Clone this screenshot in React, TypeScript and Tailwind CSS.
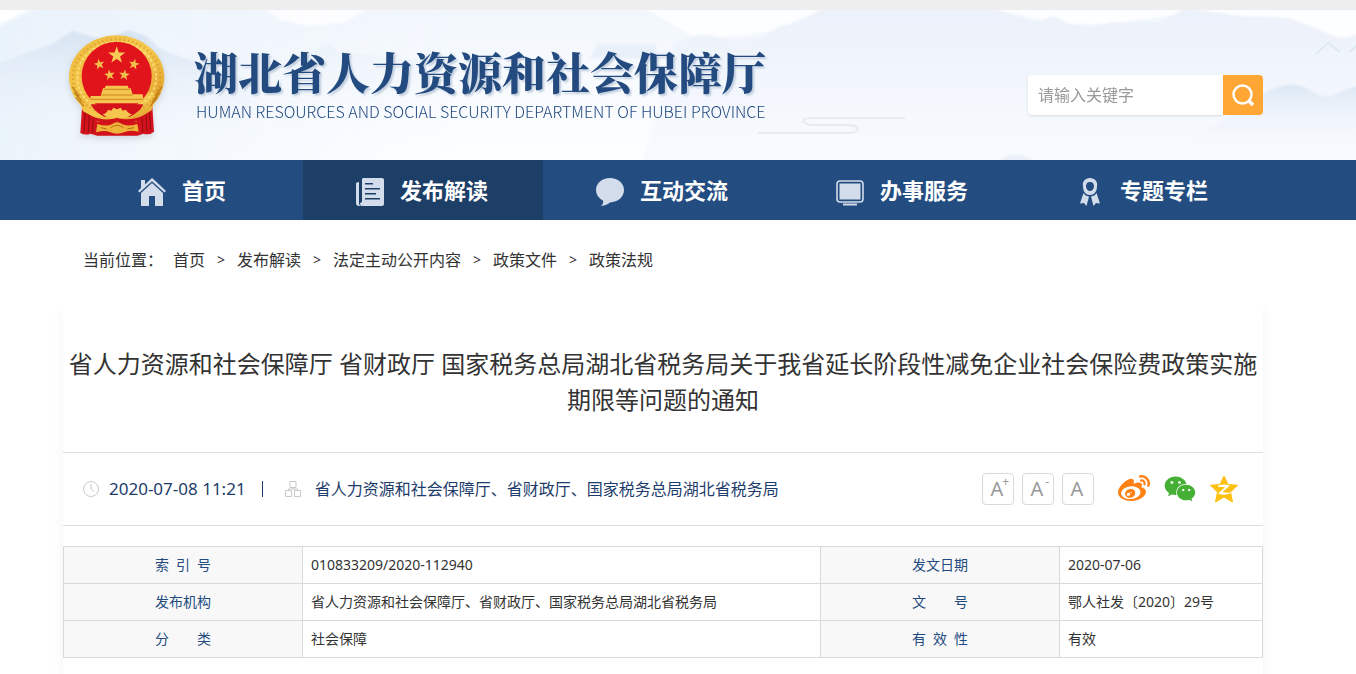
import type { ReactNode } from 'react';
import { FaWeibo, FaWeixin } from 'react-icons/fa';

const starPoints = (cx: number, cy: number, r: number, turn = 0) =>
    Array.from({ length: 10 }, (_, i) => {
        const radius = i % 2 ? r * 0.4 : r;
        const angle = ((i * 36 - 90 + turn) * Math.PI) / 180;
        return `${(cx + radius * Math.cos(angle)).toFixed(1)},${(cy + radius * Math.sin(angle)).toFixed(1)}`;
    }).join(' ');

const Emblem = () => (
    <svg className="h-[120px] w-[106px] shrink-0 drop-shadow-md" viewBox="9 0 318 360" aria-hidden="true">
        <defs>
            <linearGradient id="gold" x1="0" y1="0" x2="1" y2="1">
                <stop offset="0" stopColor="#edb93c" />
                <stop offset="0.5" stopColor="#f5c94e" />
                <stop offset="1" stopColor="#dd9422" />
            </linearGradient>
        </defs>
        <path d="M67 232 L61 324 Q76 332 92 326 L112 332 H232 L250 326 Q268 332 282 320 L276 232 Z" fill="#d3121b" />
        <path d="M76 262 L72 320 M88 270 L85 322 M100 276 L98 322 M246 276 L248 322 M258 270 L261 320 M268 262 L272 316" stroke="#8f0c12" strokeWidth="3" fill="none" />
        <ellipse cx="170" cy="157" rx="143" ry="126" fill="url(#gold)" />
        <path d="M52 205 L68 258 L94 272 L112 290 H230 L252 270 L275 256 L291 205 Z" fill="url(#gold)" />
        <ellipse cx="170" cy="157" rx="131" ry="114" fill="none" stroke="#c98317" strokeWidth="7" strokeDasharray="4 9" opacity="0.5" />
        <ellipse cx="170" cy="157" rx="118" ry="106" fill="none" stroke="#ffe68a" strokeWidth="6" strokeDasharray="9 6" opacity="0.7" />
        <path d="M36 185 L58 214 M42 202 L66 230 M306 185 L284 214 M300 202 L276 230 M48 218 L72 244 M292 218 L270 244" stroke="#c07c16" strokeWidth="4" />
        <ellipse cx="170" cy="154" rx="105" ry="104" fill="#e1131b" />
        <polygon points={starPoints(170, 91, 27)} fill="#f7ca55" />
        <polygon points={starPoints(118, 118, 17, -12)} fill="#f3c04b" />
        <polygon points={starPoints(222, 118, 17, 12)} fill="#f3c04b" />
        <polygon points={starPoints(149, 150, 17, -8)} fill="#f3c04b" />
        <polygon points={starPoints(193, 150, 17, 8)} fill="#f3c04b" />
        <path d="M137 182 H203 L206 190 H212 L218 208 H248 L252 235 H88 L92 213 H122 L129 190 H134 Z" fill="#f6c54f" />
        <path d="M132 193 H210 M124 210 H218 M92 223 H250" stroke="#c9861f" strokeWidth="3" />
        <path d="M92 238 H250 Q240 262 208 276 L171 262 L134 276 Q104 262 92 238 Z" fill="#d3121b" />
        <path d="M128 268 Q142 264 144 254 L154 257 L160 248 L171 253 L182 248 L188 257 L198 254 Q202 264 216 268 Q198 284 171 276 Q146 284 128 268 Z" fill="#f6c54f" />
        <path d="M94 272 Q132 290 171 279 Q212 290 252 270 L242 286 Q206 298 171 290 Q134 298 102 286 Z" fill="#cf111a" />
        <path d="M112 297 Q140 306 156 298 Q171 286 187 298 Q206 306 232 297 L236 320 Q206 314 192 322 Q171 330 151 322 Q136 314 108 322 Z" fill="#efb53b" />
        <path d="M152 308 Q171 294 191 308 M122 308 L140 312 M202 312 L222 308" stroke="#b56d12" strokeWidth="3" fill="none" />
    </svg>
);

const Mountains = () => (
    <svg className="absolute inset-0 h-full w-full" viewBox="0 0 1356 150" preserveAspectRatio="none" aria-hidden="true">
        <defs>
            <linearGradient id="sky" x1="0" y1="0" x2="0" y2="1">
                <stop offset="0" stopColor="#f2f7fd" />
                <stop offset="1" stopColor="#fdfeff" />
            </linearGradient>
            <linearGradient id="hill" x1="0" y1="0" x2="0" y2="1">
                <stop offset="0" stopColor="#d6e3f2" />
                <stop offset="0.8" stopColor="#f1f6fc" stopOpacity="0" />
            </linearGradient>
            <linearGradient id="leftSky" x1="0" y1="0" x2="1" y2="0">
                <stop offset="0" stopColor="#e6f0fa" />
                <stop offset="1" stopColor="#f2f7fd" stopOpacity="0" />
            </linearGradient>
            <linearGradient id="farHill" x1="0" y1="0" x2="0" y2="1">
                <stop offset="0" stopColor="#ebf1fa" />
                <stop offset="0.5" stopColor="#f3f7fd" />
                <stop offset="1" stopColor="#f8fafe" />
            </linearGradient>
            <filter id="mist">
                <feGaussianBlur stdDeviation="1.2" />
            </filter>
        </defs>
        <rect width="1356" height="150" fill="url(#sky)" />
        <g filter="url(#mist)">
            <path d="M-6 20 Q20 6 50 -4 H480 V156 H-6 Z" fill="url(#leftSky)" opacity="0.8" />
            <path d="M-6 -6 H40 Q20 4 -6 16 Z" fill="#ffffff" />
            <path d="M262 -4 H372 L345 12 L310 16 L280 10 Z M640 -4 H860 L800 8 L780 20 L700 30 Z M980 -4 H1370 V42 L1310 18 L1180 4 L1110 14 L1060 14 Z" fill="#ffffff" opacity="0.8" />
            <path d="M-6 56 L20 46 L52 34 L72 21 L90 26 L106 30 L128 20 L146 26 L162 40 L190 50 L250 70 V150 H-6 Z" fill="url(#hill)" />
            <path d="M296 48 L318 38 L328 34 L338 42 L420 50 L440 120 H290 Z" fill="url(#hill)" opacity="0.3" />
            <path d="M598 34 H656 V42 H690 V48 H590 Z" fill="#e8f0f9" />
            <path d="M676 32 L700 24 L740 30 L764 26 L780 16 L800 12 L826 -4 H986 L1010 4 L1034 12 L1054 6 L1070 14 L1094 16 L1112 12 L1160 12 L1186 -2 L1240 6 L1290 8 L1320 20 L1340 28 L1362 24 V160 H640 Z" fill="url(#farHill)" />
            <path d="M1150 150 L1220 112 L1262 84 Q1290 68 1310 80 Q1326 92 1340 82 L1362 74 V150 Z" fill="url(#hill)" opacity="0.8" />
            <path d="M994 154 Q1016 136 1038 154 Z" fill="#e9eef8" />
        </g>
        <path d="M1316 44 L1328 33 L1340 42 M1350 42 L1356 36" stroke="#dceaf2" strokeWidth="2" fill="none" />
        <path d="M758 123 H850 Q858 122 858 118 Q856 115 846 115 H812 Q803 114 803 110 Q804 108 816 108 H905" stroke="#e6ebf2" strokeWidth="2" fill="none" />
    </svg>
);

const HomeIcon = () => (
    <svg className="size-7" viewBox="0 0 28 28" fill="#d3dcea" aria-hidden="true">
        <path d="M14 0 L18 3.500 L28 13 L26.500 14.500 L14 3.200 L1.500 14.500 L0 13 L3 10 V2 H7 V6.400 Z" />
        <path d="M14 5 L25 15 V28 H17 V18 H11 V28 H3 V15 Z" />
    </svg>
);

const NewsIcon = () => (
    <svg className="size-7" viewBox="0 0 28 28" fill="#d3dcea" aria-hidden="true">
        <path d="M3 4 V25 Q3 28 6 28 H3 Q0 28 0 25 V6 Q0 4 3 4 Z" />
        <path fillRule="evenodd" d="M7 0 H26 Q28 0 28 2 V26 Q28 28 26 28 H6 Q4 28 4 25 Q6 25 6 23 V2 Q6 0 7 0 Z M9 5 V6.500 H17 V5 Z M9 10 V11.500 H24 V10 Z M9 15 V16.500 H20 V15 Z M9 20 V21.500 H24 V20 Z" />
    </svg>
);

const BubbleIcon = () => (
    <svg className="size-7" viewBox="0 0 28 28" fill="#d3dcea" aria-hidden="true">
        <path d="M14 0 C22 0 28 5 28 12 C28 19 22 24 14 24.500 Q11 27 5 28 Q8 25 7 22.500 Q0 19 0 12 C0 5 6 0 14 0 Z" />
    </svg>
);

const ScreenIcon = () => (
    <svg className="size-7" viewBox="0 0 28 28" fill="#d3dcea" aria-hidden="true">
        <rect x="1" y="3" width="26" height="21" rx="3" fill="none" stroke="#d3dcea" strokeWidth="1.600" />
        <rect x="3.500" y="5.500" width="21" height="16" />
        <rect x="7" y="25.500" width="14" height="2" />
    </svg>
);

const RibbonIcon = () => (
    <svg className="size-7" viewBox="0 0 28 28" fill="#d3dcea" aria-hidden="true">
        <path fillRule="evenodd" d="M14 0 C19 0 22 4 21 8 C21 14 18 17 14 17 C10 17 7 14 7 8 C6 4 9 0 14 0 Z M14 4 C11 4 10 6 10 8.500 C10 11 12 13 14 13 C16 13 18 11 18 8.500 C18 6 17 4 14 4 Z" />
        <path d="M7.500 15 Q9 18 13 18.500 L10.500 28 L8 25 L4 25.500 Z M20.500 15 Q19 18 15 18.500 L17.500 28 L20 25 L24 25.500 Z" />
    </svg>
);

const QzoneIcon = () => (
    <svg className="size-7" viewBox="0 0 28 28" aria-hidden="true">
        <path d="M14 1 L18 9.500 L27.500 10.300 L20.500 17 L22.500 27 L14 22 L5.500 27 L7.500 17 L.5 10.300 L10 9.500 Z" fill="#fdc00f" stroke="#fdc00f" strokeLinejoin="round" />
        <path d="M8 10.500 Q14 8.500 20 10.500 L12.500 17 Q18 18.500 23 17 Q16 21.500 8 18.500 L15 12.300 Q11 11.300 8 12 Z" fill="#fff" />
    </svg>
);

const navItems: { label: string; icon: ReactNode; active?: boolean }[] = [
    { label: '首页', icon: <HomeIcon /> },
    { label: '发布解读', icon: <NewsIcon />, active: true },
    { label: '互动交流', icon: <BubbleIcon /> },
    { label: '办事服务', icon: <ScreenIcon /> },
    { label: '专题专栏', icon: <RibbonIcon /> },
];

const crumbs = ['首页', '发布解读', '法定主动公开内容', '政策文件', '政策法规'];

const rows = [
    ['索\u2002引\u2002号', '010833209/2020-112940', '发文日期', '2020-07-06'],
    ['发布机构', '省人力资源和社会保障厅、省财政厅、国家税务总局湖北省税务局', '文\u3000\u3000号', '鄂人社发〔2020〕29号'],
    ['分\u3000\u3000类', '社会保障', '有\u2002效\u2002性', '有效'],
];

const Header = () => (
    <header>
        <div className="h-2.5 bg-[#eeeeee]" />
        <div className="relative pr-[30px]">
            <Mountains />
            <div className="relative mx-auto flex h-[150px] max-w-[1200px] items-center justify-between">
                <div className="flex items-center gap-[25px]">
                    <Emblem />
                    <div className="text-[#234b80]">
                        <div className="font-['Noto_Serif_CJK_SC','Noto_Sans_CJK_SC',serif] text-[44px] leading-[52px] font-black whitespace-nowrap [text-shadow:2px_2px_2px_#c3cfdf]">
                            湖北省人力资源和社会保障厅
                        </div>
                        <div className="pl-0.5 font-['Noto_Sans_CJK_SC',sans-serif] text-base leading-7 font-light whitespace-nowrap">
                            HUMAN RESOURCES AND SOCIAL SECURITY DEPARTMENT OF HUBEI PROVINCE
                        </div>
                    </div>
                </div>
                <form className="mt-5 flex" onSubmit={(e) => e.preventDefault()}>
                    <input
                        type="text"
                        aria-label="请输入关键字"
                        placeholder="请输入关键字"
                        className="h-10 w-[195px] rounded-l bg-white px-2.5 text-base shadow-sm outline-none placeholder:text-[#999999]"
                    />
                    <button type="submit" aria-label="搜索" className="flex size-10 items-center justify-center rounded-r bg-[#ffa634]">
                        <svg className="size-6" viewBox="0 0 24 24" fill="none" stroke="#fff" strokeWidth="2.500" aria-hidden="true">
                            <circle cx="11.500" cy="11.500" r="9" />
                            <path d="M17.500 17.500 L22 22" strokeWidth="3.500" />
                        </svg>
                    </button>
                </form>
            </div>
        </div>
        <nav className="bg-[#234d81] pr-[30px]">
            <div className="mx-auto grid max-w-[1200px] grid-cols-5">
                {navItems.map((item) => (
                    <a
                        key={item.label}
                        href="#"
                        className={`flex h-[60px] items-center justify-center gap-4 pr-0.5 text-[22px] font-bold text-white ${item.active ? 'bg-[#1c3e67]' : ''}`}
                    >
                        <span className="pt-1">{item.icon}</span>
                        {item.label}
                    </a>
                ))}
            </div>
        </nav>
    </header>
);

const sizeButton = 'relative flex size-8 items-center justify-center rounded-sm border border-[#d9d9d9] pr-0.5 text-xl text-[#999999]';

const ArticleMeta = () => (
    <div className="flex h-[74px] items-center justify-between border-y border-[#dddddd] px-5 text-[#1d3c6b]">
        <div className="flex items-center">
            <svg className="size-4" viewBox="0 0 16 16" fill="none" stroke="#c9c9c9" aria-hidden="true">
                <circle cx="8" cy="8" r="7.500" />
                <path d="M8 3 V8 L11 10.500" />
            </svg>
            <time className="ml-2.5 text-[17px]">2020-07-08 11:21</time>
            <span className="ml-4 h-4 w-px bg-[#1d3c6b]" />
            <svg className="ml-[22px] size-4" viewBox="0 0 16 16" fill="none" stroke="#c9c9c9" aria-hidden="true">
                <path d="M5 .5 H11 V6.500 H5 Z M.5 9.500 H6.500 V15.500 H.5 Z M9.500 9.500 H15.500 V15.500 H9.500 Z M8 6.500 V8 M3.500 9.500 V8 H12.500 V9.500" />
            </svg>
            <span className="ml-3.5 text-base">省人力资源和社会保障厅、省财政厅、国家税务总局湖北省税务局</span>
        </div>
        <div className="flex items-center gap-2">
            <button type="button" aria-label="放大字号" className={sizeButton}>
                A<sup className="absolute top-0.5 right-1 text-xs leading-none">+</sup>
            </button>
            <button type="button" aria-label="缩小字号" className={sizeButton}>
                A<sup className="absolute top-0.5 right-1 text-xs leading-none">-</sup>
            </button>
            <button type="button" aria-label="默认字号" className={sizeButton}>A</button>
            <div className="ml-4 flex items-center gap-3.5 pr-[5px]">
                <a href="#" aria-label="微博"><FaWeibo className="size-8 text-[#ff8113]" /></a>
                <a href="#" aria-label="微信"><FaWeixin className="size-8 text-[#45b035]" /></a>
                <a href="#" aria-label="QQ空间"><QzoneIcon /></a>
            </div>
        </div>
    </div>
);

const InfoTable = () => (
    <table className="mt-5 w-full table-fixed border-collapse text-sm text-[#333333]">
        <colgroup>
            <col className="w-[239px]" />
            <col />
            <col className="w-[239px]" />
            <col className="w-[203px]" />
        </colgroup>
        <tbody>
            {rows.map((row) => (
                <tr key={row[0]} className="h-[37px]">
                    {row.map((cell, i) =>
                        i % 2 === 0 ? (
                            <th key={i} scope="row" className="border border-[#d9d9d9] bg-[#f8f8f8] font-normal text-[#234b80]">{cell}</th>
                        ) : (
                            <td key={i} className="border border-[#d9d9d9] px-2">{cell}</td>
                        ),
                    )}
                </tr>
            ))}
        </tbody>
    </table>
);

const App = () => {
    return (
        <div className="bg-white font-['Noto_Sans','Noto_Sans_CJK_SC',sans-serif] text-[#333333]">
            <Header />
            <main className="pr-[30px]">
                <div className="mx-auto max-w-[1200px]">
                    <div className="flex h-20 items-center px-5 text-base">
                        <span>当前位置：</span>
                        <ol className="flex pl-2.5">
                            {crumbs.map((crumb, i) => (
                                <li key={crumb} className="flex">
                                    {i > 0 && <span className="w-8 text-center text-sm leading-6">&gt;</span>}
                                    <a href="#">{crumb}</a>
                                </li>
                            ))}
                        </ol>
                    </div>
                    <article className="bg-white pt-[46px] pb-4 shadow-[0_10px_12px_rgba(0,0,0,0.05)]">
                        <h1 className="mb-[34px] text-center text-2xl leading-9">
                            省人力资源和社会保障厅 省财政厅 国家税务总局湖北省税务局关于我省延长阶段性减免企业社会保险费政策实施期限等问题的通知
                        </h1>
                        <ArticleMeta />
                        <InfoTable />
                    </article>
                </div>
            </main>
        </div>
    );
};

export default App;
